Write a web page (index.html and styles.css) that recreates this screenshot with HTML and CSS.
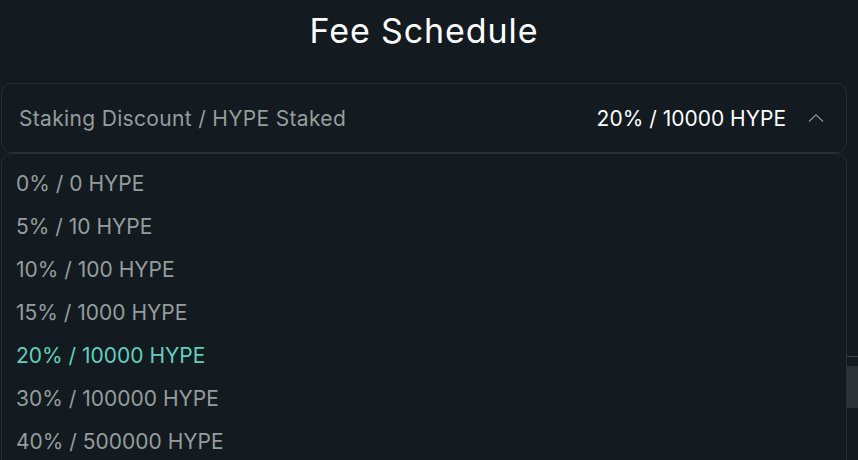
FILE: index.html
```html
<!DOCTYPE html>
<html>
<head>
<meta charset="utf-8">
<link rel="stylesheet" href="styles.css">
</head>
<body>
<div class="page">
  <h1 class="title">Fee Schedule</h1>
  <div class="select">
    <div class="trigger">
      <span class="label">Staking Discount / HYPE Staked</span>
      <span class="value">20% / 10000 HYPE</span>
      <svg class="chev" width="16" height="10" viewBox="0 0 16 10"><path d="M1 8.5 L8 1.8 L15 8.5" fill="none" stroke="#8a9497" stroke-width="1.3"/></svg>
    </div>
    <div class="behind">
      <div class="rule"></div>
      <div class="thumb"></div>
    </div>
    <ul class="list">
      <li class="opt">0% / 0 HYPE</li>
      <li class="opt">5% / 10 HYPE</li>
      <li class="opt">10% / 100 HYPE</li>
      <li class="opt">15% / 1000 HYPE</li>
      <li class="opt active">20% / 10000 HYPE</li>
      <li class="opt">30% / 100000 HYPE</li>
      <li class="opt">40% / 500000 HYPE</li>
    </ul>
  </div>
</div>
</body>
</html>
```
FILE: styles.css
```css
html, body {
  margin: 0;
  padding: 0;
  background: #131a20;
  height: 100%;
  overflow: hidden;
}
body {
  font-family: Inter, "Liberation Sans", sans-serif;
  color: #f6fefd;
}
.page {
  padding: 0 11px 0 1px;
}
.title {
  margin: 0 0 23px;
  height: 60px;
  display: flex;
  align-items: center;
  justify-content: center;
  font-size: 34px;
  letter-spacing: 0.9px;
  font-weight: 400;
  color: #ffffff;
}
.select {
  position: relative;
}
.trigger {
  height: 68px;
  border: 1px solid #262f34;
  border-radius: 10px;
  display: flex;
  align-items: center;
  padding: 0 22px 0 17px;
  font-size: 21px;
}
.label {
  color: #949e9c;
  flex: 1;
  letter-spacing: 0.33px;
}
.value {
  color: #ffffff;
}
.chev {
  margin-left: 22px;
}
.behind {
  position: relative;
  height: 320px;
}
.rule {
  position: absolute;
  top: 203px;
  left: 0;
  right: -11px;
  height: 1px;
  background: #3b4247;
}
.thumb {
  position: absolute;
  top: 213px;
  right: -11px;
  width: 11px;
  height: 42px;
  background: #2b3338;
}
.list {
  position: absolute;
  top: 70px;
  left: 0;
  right: 0;
  margin: 0;
  list-style: none;
  background: #131a20;
  border: 1px solid #262f34;
  border-radius: 10px;
  padding: 8px 0 20px 14px;
  font-size: 21px;
  color: #949e9c;
}
.opt {
  height: 43px;
  display: flex;
  align-items: center;
}
.opt.active {
  color: #62d0bc;
}
```
